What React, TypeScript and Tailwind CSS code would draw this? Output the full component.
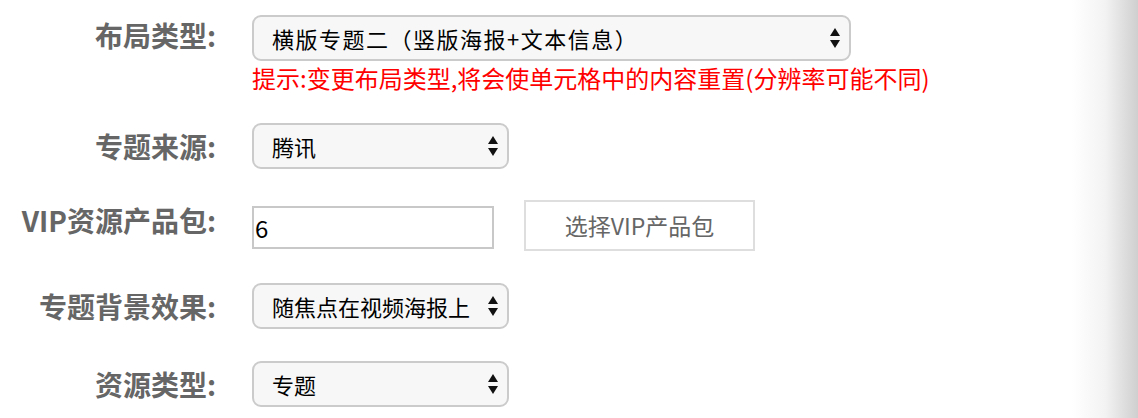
const font = { fontFamily: '"Noto Sans CJK SC", "Noto Sans", sans-serif' };

const Arrows = () => (
  <svg width="10" height="20" viewBox="0 0 10 20" className="pointer-events-none absolute right-[11px] top-1/2 -translate-y-1/2">
    <path d="M5 0 L10 8 L0 8 Z" fill="#111" />
    <path d="M0 12 L10 12 L5 20 Z" fill="#111" />
  </svg>
);

interface SelectProps {
  value: string;
  width: string;
  wide?: boolean;
}

const FakeSelect = ({ value, width, wide }: SelectProps) => (
  <div className={`relative h-[46px] ${width}`}>
    <select
      defaultValue={value}
      className={`h-full w-full appearance-none rounded-[9px] border-2 border-[#cbcbcb] bg-[#f7f7f7] pl-[18px] pr-[32px] text-[22px] text-black outline-none ${wide ? 'tracking-[1.5px]' : ''}`}
      style={font}
    >
      <option value={value}>{value}</option>
    </select>
    <Arrows />
  </div>
);

const Label = ({ text, lh = 'leading-[46px]' }: { text: string; lh?: string }) => (
  <div className={`w-[216px] shrink-0 text-right text-[28px] font-bold text-[#666] ${lh}`}>{text}</div>
);

export default function App() {
  return (
    <div className="flex h-[418px] w-full overflow-hidden bg-white" style={font}>
      <div className="flex flex-1 flex-col pt-[15px]">
        <div className="flex items-start">
          <Label text="布局类型:" lh="leading-[40px]" />
          <div className="ml-[36px] flex flex-col">
            <FakeSelect value="横版专题二（竖版海报+文本信息）" width="w-[599px]" wide />
            <div className="mt-[2px] text-[24px] leading-[30px] text-[#ff0000]">
              提示:变更布局类型,将会使单元格中的内容重置(分辨率可能不同)
            </div>
          </div>
        </div>

        <div className="mt-[30px] flex items-start">
          <Label text="专题来源:" />
          <div className="ml-[36px]">
            <FakeSelect value="腾讯" width="w-[257px]" />
          </div>
        </div>

        <div className="mt-[31px] flex items-start">
          <Label text="VIP资源产品包:" lh="leading-[40px]" />
          <input
            defaultValue="6"
            className="ml-[36px] mt-[6px] h-[43px] w-[242px] border-2 border-[#c8c8c8] px-[1px] text-[24px] text-black outline-none"
            style={font}
          />
          <button className="ml-[30px] h-[51px] w-[231px] border-2 border-[#dedede] bg-white text-[23px] text-[#666]" style={font}>
            选择VIP产品包
          </button>
        </div>

        <div className="mt-[32px] flex items-start">
          <Label text="专题背景效果:" />
          <div className="ml-[36px]">
            <FakeSelect value="随焦点在视频海报上" width="w-[257px]" />
          </div>
        </div>

        <div className="mt-[32px] flex items-start">
          <Label text="资源类型:" />
          <div className="ml-[36px]">
            <FakeSelect value="专题" width="w-[257px]" />
          </div>
        </div>
      </div>
      <div className="h-full w-[66px] shrink-0 bg-gradient-to-r from-white via-[#f3f3f3] to-[#cfcfcf]" />
    </div>
  );
}
